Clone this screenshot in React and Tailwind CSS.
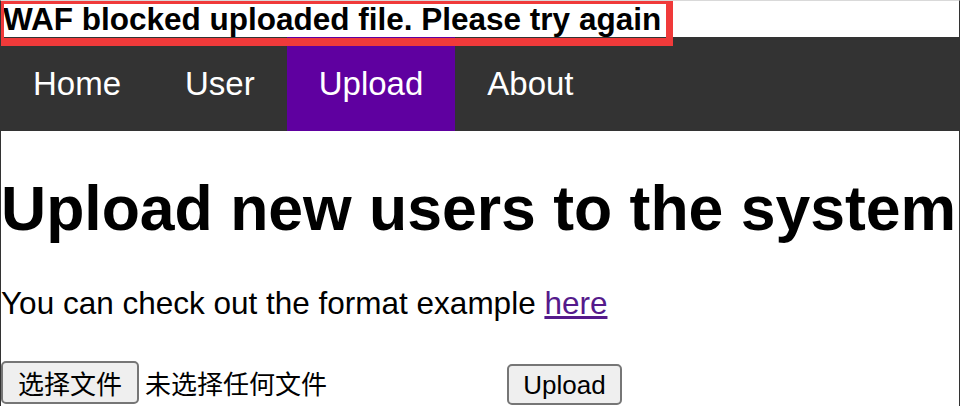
import { useState } from 'react'

const navItems = ['Home', 'User', 'Upload', 'About']

export default function App() {
  const [active] = useState('Upload')

  return (
    <div className="relative h-[406px] w-[960px] overflow-hidden border-x border-t border-x-[#333] border-t-[#d9d9d9] bg-white font-['Liberation_Sans',Arial,'Noto_Sans_CJK_SC',sans-serif] text-black">
      <div className="h-[36px] whitespace-nowrap pl-[2px] text-[31.5px] font-bold leading-[36px]">
        WAF blocked uploaded file. Please try again
      </div>

      <nav className="flex h-[94px] bg-[#333]">
        {navItems.map((item) => (
          <a
            key={item}
            href="#"
            className={`block px-[32px] text-[33px] leading-[94px] text-white ${
              item === active ? 'bg-[#5f00a0]' : ''
            }`}
          >
            {item}
          </a>
        ))}
      </nav>

      <h1 className="mt-[41px] whitespace-nowrap text-[62.5px] font-bold leading-[72px]">
        Upload new users to the system
      </h1>

      <p className="mt-[41px] whitespace-nowrap text-[31.5px] leading-[36px]">
        You can check out the format example{' '}
        <a href="#" className="text-[#551a8b] underline">
          here
        </a>
      </p>

      <form className="mt-[40px] flex items-start">
        <div className="flex w-[506px] items-center">
          <button
            type="button"
            className="h-[43px] rounded-[5px] border-2 border-[#767676] bg-[#efefef] px-[15px] font-['Noto_Sans_CJK_SC',sans-serif] text-[26px] leading-none"
          >
            选择文件
          </button>
          <span className="ml-[6px] font-['Noto_Sans_CJK_SC',sans-serif] text-[26px] leading-none">
            未选择任何文件
          </span>
        </div>
        <button
          type="submit"
          className="mt-[3px] h-[41px] w-[115px] rounded-[5px] border-2 border-[#767676] bg-[#efefef] text-[26px] leading-none"
        >
          Upload
        </button>
      </form>

      <div className="pointer-events-none absolute left-[-4px] top-[-4px] h-[49px] w-[676px] border-[7px] border-b-[8px] border-[#f03a3a]" />
    </div>
  )
}
